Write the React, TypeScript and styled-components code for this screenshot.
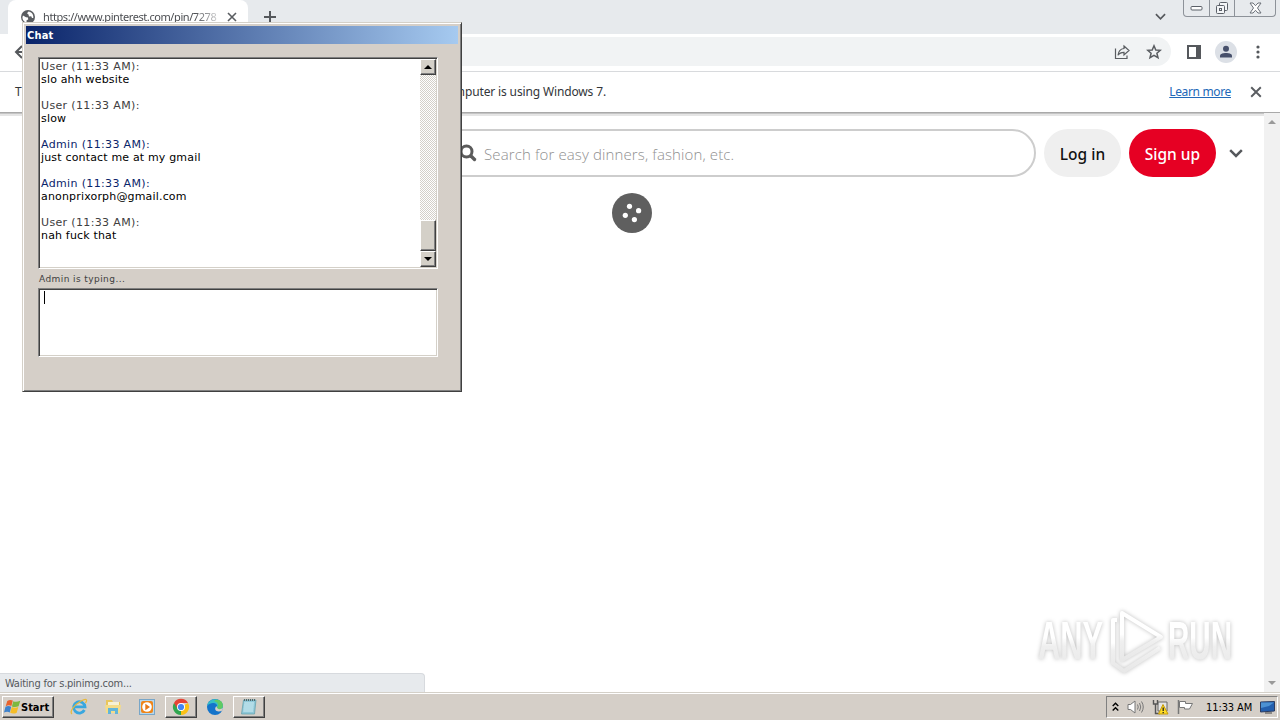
import type { ReactNode } from 'react';
import styled, { createGlobalStyle, css } from 'styled-components';

interface Message {
    author: 'User' | 'Admin';
    time: string;
    text: string;
}

const messages: Message[] = [
    { author: 'User', time: '11:33 AM', text: 'slo ahh website' },
    { author: 'User', time: '11:33 AM', text: 'slow' },
    { author: 'Admin', time: '11:33 AM', text: 'just contact me at my gmail' },
    { author: 'Admin', time: '11:33 AM', text: 'anonprixorph@gmail.com' },
    { author: 'User', time: '11:33 AM', text: 'nah fuck that' },
];

function CloseIcon({ size = 10 }: { size?: number }) {
    return (
        <svg width={size} height={size} viewBox="0 0 10 10">
            <path d="M1 1L9 9M9 1L1 9" stroke="#5a5d61" strokeWidth="1.6" fill="none" />
        </svg>
    );
}

function ChevronIcon({ size = 12, weight = 2 }: { size?: number; weight?: number }) {
    return (
        <svg width={size} height={size} viewBox="0 0 12 12">
            <path d="M1 3.5L6 8.5L11 3.5" stroke="#55585c" strokeWidth={weight} fill="none" />
        </svg>
    );
}

function TabStrip() {
    return (
        <Strip>
            <Tab>
                <svg width="14" height="14" viewBox="0 0 14 14">
                    <circle cx="7" cy="7" r="7" fill="#5a5d61" />
                    <path d="M2 5.5L5 7.2L7 7.5L7.2 9.5L5.6 10.2L5.5 12.4C3 12 1.2 9.5 1.5 7ZM7.5 1.6L6 3.3L7.5 4.6L8 6.4L10.2 6.3L11 8L12.3 8C12.8 4.5 10.5 2 7.5 1.6Z" fill="#fff" />
                </svg>
                <TabTitle>https://www.pinterest.com/pin/7278</TabTitle>
                <CloseIcon />
            </Tab>
            <NewTab>
                <svg width="12" height="12" viewBox="0 0 12 12">
                    <path d="M6 0V12M0 6H12" stroke="#55585c" strokeWidth="2" />
                </svg>
            </NewTab>
            <TabSearch>
                <ChevronIcon size={11} weight={1.8} />
            </TabSearch>
            <WindowControls>
                <Control $width={25}>
                    <svg width="13" height="6" viewBox="0 0 13 6">
                        <rect x="1" y="1.5" width="11" height="3.5" rx="1" fill="#fff" stroke="#5b6068" />
                    </svg>
                </Control>
                <Control $width={25}>
                    <svg width="14" height="14" viewBox="0 0 14 14" fill="#f3f5f7" stroke="#5b6068">
                        <rect x="4.5" y="1.5" width="8" height="8" rx="1" />
                        <rect x="1.5" y="4.5" width="8" height="8" rx="1" />
                        <rect x="4.5" y="7.5" width="2" height="2" />
                    </svg>
                </Control>
                <Control $width={41}>
                    <svg width="13" height="12" viewBox="0 0 13 12">
                        <path d="M1 1H4L6.5 3.7L9 1H12L8.5 6L12 11H9L6.5 8.3L4 11H1L4.5 6Z" fill="#fff" stroke="#6b7078" />
                    </svg>
                </Control>
            </WindowControls>
        </Strip>
    );
}

function Toolbar() {
    return (
        <Bar>
            <svg width="14" height="14" viewBox="0 0 14 14">
                <path d="M14 7H2M8 1L2 7L8 13" stroke="#55585c" strokeWidth="2" fill="none" />
            </svg>
            <Omnibox>
                <svg width="16" height="16" viewBox="0 0 16 16" fill="none" stroke="#5a5d61" strokeWidth="1.2">
                    <path d="M1.5 4.5V14.5H13V11.5" />
                    <path d="M10 2L15 6.5L10 11V8.3C7.2 8.3 5.2 9.2 4 11.3C4.3 8 6 5 10 4.5Z" />
                </svg>
                <svg width="16" height="16" viewBox="0 0 16 16" fill="none" stroke="#5a5d61" strokeWidth="1.5">
                    <path d="M8 1.8L9.8 6L14.3 6.3L10.9 9.2L12 13.7L8 11.3L4 13.7L5.1 9.2L1.7 6.3L6.2 6Z" />
                </svg>
            </Omnibox>
            <SidePanelIcon />
            <Avatar>
                <svg width="14" height="14" viewBox="0 0 14 14" fill="#47506b">
                    <circle cx="7" cy="3.8" r="3" />
                    <path d="M1 12.5V11C1 8.8 4 8 7 8S13 8.8 13 11V12.5Z" />
                </svg>
            </Avatar>
            <svg width="4" height="14" viewBox="0 0 4 14" fill="#55585c">
                <circle cx="2" cy="2" r="1.6" />
                <circle cx="2" cy="7" r="1.6" />
                <circle cx="2" cy="12" r="1.6" />
            </svg>
        </Bar>
    );
}

function InfoBar() {
    return (
        <Info>
            <InfoText>
                <span>T</span>
                <span>computer is using Windows 7.</span>
            </InfoText>
            <LearnMore>Learn more</LearnMore>
            <CloseIcon size={12} />
        </Info>
    );
}

function Watermark() {
    return (
        <Mark width="210" height="76" viewBox="0 0 210 76">
            <defs>
                <linearGradient id="fade" x1="0" y1="0" x2="0" y2="1">
                    <stop offset="0.45" stopColor="#fff" />
                    <stop offset="0.6" stopColor="#efefef" />
                    <stop offset="1" stopColor="#e8e8e8" />
                </linearGradient>
            </defs>
            <g fill="url(#fade)" fontFamily="'Liberation Sans Narrow', 'Liberation Sans', sans-serif" fontWeight="700" fontSize="53">
                <text x="8" y="58" textLength="65" lengthAdjust="spacingAndGlyphs">ANY</text>
                <text x="138" y="58" textLength="64" lengthAdjust="spacingAndGlyphs">RUN</text>
            </g>
            <g fill="none" stroke="url(#fade)" strokeWidth="4" strokeLinejoin="round">
                <path d="M92 54V12L131 36L92 59Z" />
                <path d="M83 53V19H87M83 50V62L94 70L130 47" />
            </g>
        </Mark>
    );
}

function Page() {
    return (
        <Content>
            <Main>
                <Header>
                    <Search>
                        <svg width="18" height="18" viewBox="0 0 18 18" fill="none" stroke="#5b5b5b" strokeLinecap="round">
                            <circle cx="7.5" cy="7.5" r="5.5" strokeWidth="3" />
                            <path d="M12 12L15.5 15.5" strokeWidth="3.4" />
                        </svg>
                        <span>Search for easy dinners, fashion, etc.</span>
                    </Search>
                    <Pill $width={77}>Log in</Pill>
                    <Pill $width={87} $primary>
                        Sign up
                    </Pill>
                    <ChevronIcon size={14} weight={2.1} />
                </Header>
                <Spinner>
                    <svg width="40" height="40" viewBox="0 0 40 40" fill="#fff">
                        <circle cx="17.5" cy="13.3" r="2.6" />
                        <circle cx="26.6" cy="17.7" r="2.6" />
                        <circle cx="13.3" cy="22.3" r="2.6" />
                        <circle cx="22.4" cy="26.6" r="2.6" />
                    </svg>
                </Spinner>
                <Bottom>
                    <Status>Waiting for s.pinimg.com...</Status>
                    <Watermark />
                </Bottom>
            </Main>
            <PageScroll>
                <Arrow $color="#9a9a9a" $size={4} $up />
                <Arrow $color="#9a9a9a" $size={4} />
            </PageScroll>
        </Content>
    );
}

function ChatWindow() {
    return (
        <Chat>
            <ChatTitle>Chat</ChatTitle>
            <ChatBody>
                <Log>
                    <LogText>
                        {messages.map((message, index) => (
                            <Entry key={index}>
                                <Author $admin={message.author === 'Admin'}>
                                    {message.author} ({message.time}):
                                </Author>
                                <p>{message.text}</p>
                            </Entry>
                        ))}
                    </LogText>
                    <LogScroll>
                        <ScrollButton>
                            <Arrow $color="#000" $size={4} $up />
                        </ScrollButton>
                        <Track />
                        <Thumb />
                        <ScrollButton>
                            <Arrow $color="#000" $size={4} />
                        </ScrollButton>
                    </LogScroll>
                </Log>
                <Typing>Admin is typing...</Typing>
                <Input>
                    <Caret />
                </Input>
            </ChatBody>
        </Chat>
    );
}

function TaskButton({ active, children }: { active?: boolean; children: ReactNode }) {
    return (
        <Task $active={active}>
            <svg width="20" height="20" viewBox="0 0 20 20">
                {children}
            </svg>
        </Task>
    );
}

function Taskbar() {
    return (
        <Tasks>
            <Start>
                <svg width="17" height="16" viewBox="0 0 17 16">
                    <path d="M3.3 2Q6 0 8.8 1.6L7.4 7Q4.8 5.6 1.7 7.2Z" fill="#e8622c" />
                    <path d="M9.3 2.2Q12 3.6 16.3 1.8L14.6 7.3Q11 8.8 7.9 7.4Z" fill="#7db83f" />
                    <path d="M1.5 7.8Q4.5 6.4 7.2 7.8L5.8 13.4Q3 12 0 13.6Z" fill="#3e82cc" />
                    <path d="M7.8 8.1Q11 9.6 14.3 8.1L12.7 13.7Q9.5 15.4 6.2 13.8Z" fill="#f5bd28" />
                </svg>
                Start
            </Start>
            <Launchers>
                <TaskButton>
                    <path d="M15.4 13A5.7 5.7 0 1 1 16 9.8H6" fill="none" stroke="#39a7df" strokeWidth="2.8" />
                    <path d="M3 17C0 15 5 8 12 4C17 1.2 19 2.2 16.5 6" fill="none" stroke="#e8b93b" strokeWidth="1.3" />
                </TaskButton>
                <TaskButton>
                    <path d="M3 3H9L10 5H17V16H3Z" fill="#e9c65c" />
                    <path d="M5 5H16V10H5Z" fill="#f7f1d3" />
                    <path d="M2 8H18L17 16H3Z" fill="#f4dc89" />
                    <path d="M5 17V11H15V17H12V14H8V17Z" fill="#62b5d9" />
                </TaskButton>
                <TaskButton>
                    <rect x="2.5" y="2.5" width="15" height="15" fill="#b7d7ec" stroke="#78a6c8" />
                    <rect x="4" y="4" width="12" height="12" rx="2" fill="#ef8519" />
                    <circle cx="10" cy="10" r="4.8" fill="#fff" />
                    <path d="M8.3 6.8L13 10L8.3 13.2Z" fill="#e77817" />
                </TaskButton>
                <TaskButton active>
                    <path d="M10 10L17 6A8 8 0 0 1 10 18Z" fill="#fbc116" />
                    <path d="M10 10V18A8 8 0 0 1 3 6Z" fill="#31a650" />
                    <path d="M10 6H17A8 8 0 0 0 3 6L6.7 12Z" fill="#e54335" />
                    <circle cx="10" cy="10" r="4" fill="#fff" />
                    <circle cx="10" cy="10" r="3.1" fill="#4285f4" />
                </TaskButton>
                <TaskButton>
                    <circle cx="10" cy="10" r="8" fill="#1474ca" />
                    <path d="M2.3 9C3 0 17 0 18 9C18.3 13 12.5 14 11.8 11C14 6 6 4 2.3 9Z" fill="#36bfc5" />
                    <path d="M10.5 3C16 2 19 7 17.5 10.5C16 13 12 13 11.8 11C15 7 12 5 9 4Z" fill="#60ca63" />
                    <path d="M11.5 9C8 13 12 16 17.5 13.5L18 10.5C16 13 12 13 11.5 9Z" fill="#d7cfc8" />
                </TaskButton>
                <TaskButton active>
                    <path d="M4.5 3H17L15.5 17H2.5Z" fill="#8fc8d8" stroke="#609dab" strokeWidth=".7" />
                    <path d="M5.3 6H15M5 8H14.8M4.8 10H14.6M4.5 12H14.4M4.3 14H14.2" stroke="#dff5fa" strokeWidth=".9" />
                    <path d="M5 3H17" stroke="#52666a" strokeWidth="2" strokeDasharray="1 1" />
                </TaskButton>
            </Launchers>
            <Tray>
                <svg width="7" height="10" viewBox="0 0 7 10" fill="none" stroke="#000" strokeWidth="1.4">
                    <path d="M.7 4L3.5 1.2L6.3 4M.7 8.5L3.5 5.7L6.3 8.5" />
                </svg>
                <svg width="17" height="16" viewBox="0 0 17 16" fill="none" stroke="#777">
                    <path d="M1 5.5H3.5L8 2V14L3.5 10.5H1Z" fill="#fff" />
                    <path d="M10.5 5.5Q12 8 10.5 10.5M12.5 4Q15 8 12.5 12M14.5 2.5Q18 8 14.5 13.5" />
                </svg>
                <svg width="17" height="16" viewBox="0 0 17 16">
                    <path d="M6 3H15V12H6Z" fill="#e5e5e5" stroke="#666" />
                    <path d="M1.5 1V5H5.5V1M3.5 5V14.5H8" fill="none" stroke="#555" strokeWidth="1.4" />
                    <path d="M11 5.5L16 15H6.5Z" fill="#ffdd25" stroke="#c79b08" />
                    <path d="M11.2 8.5V12M11.2 13V14.2" stroke="#222" strokeWidth="1.3" />
                </svg>
                <svg width="17" height="16" viewBox="0 0 17 16" fill="#fff" stroke="#777">
                    <path d="M1.5 1V15" strokeWidth="1.5" />
                    <path d="M2.5 2.5H8.5V4.5H15.5L12.5 10H7.5V8.5H2.5Z" />
                </svg>
                <Clock>11:33 AM</Clock>
                <svg width="15" height="13" viewBox="0 0 15 13">
                    <path d="M.5 1L14.5 .5V10L.5 11Z" fill="#235fae" stroke="#2d3c60" />
                    <path d="M1 1.5H14L9 5L1 7Z" fill="#4c91d3" />
                    <path d="M5 12H12" stroke="#444" />
                </svg>
            </Tray>
        </Tasks>
    );
}

function App() {
    return (
        <>
            <GlobalStyle />
            <Desktop>
                <Browser>
                    <TabStrip />
                    <Toolbar />
                    <InfoBar />
                    <Page />
                </Browser>
                <Taskbar />
                <ChatWindow />
            </Desktop>
        </>
    );
}

export default App;

const GlobalStyle = createGlobalStyle`
    * {
        box-sizing: border-box;
    }

    body {
        margin: 0;
        font-family: 'DejaVu Sans Condensed', 'DejaVu Sans', sans-serif;
        font-size: 11px;
        overflow: hidden;
    }

    p {
        margin: 0;
    }

    svg {
        display: block;
        flex-shrink: 0;
    }
`;

const raised = css`
    border: 1px solid;
    border-color: #fff #404040 #404040 #fff;
    box-shadow: inset -1px -1px #808080;
`;

const Desktop = styled.div`
    position: relative;
    display: flex;
    flex-direction: column;
    width: 1280px;
    height: 720px;
    overflow: hidden;
    background: #fff;
`;

const Browser = styled.div`
    flex: 1;
    display: flex;
    flex-direction: column;
    min-height: 0;
`;

const Strip = styled.div`
    display: flex;
    height: 34px;
    padding-left: 8px;
    background: #e7eaed;
`;

const Tab = styled.div`
    display: flex;
    align-items: center;
    width: 240px;
    padding: 0 11px 0 13px;
    border-radius: 8px 8px 0 0;
    background: #fff;
`;

const TabTitle = styled.span`
    width: 176px;
    margin: 0 8px;
    padding-bottom: 1px;
    white-space: nowrap;
    color: #4b4d51;
    font-family: 'Noto Sans', sans-serif;
    font-size: 11px;
    letter-spacing: -0.42px;
    mask-image: linear-gradient(90deg, #000 86%, rgba(0, 0, 0, 0.2));
`;

const NewTab = styled.div`
    padding: 11px 0 0 16px;
`;

const TabSearch = styled.div`
    margin: 11px 17px 0 auto;
`;

const WindowControls = styled.div`
    display: flex;
    height: 17px;
    margin-right: 4px;
    border: 1px solid #8d9299;
    border-top: 0;
    border-radius: 0 0 4px 4px;
`;

const Control = styled.div<{ $width: number }>`
    display: flex;
    align-items: center;
    justify-content: center;
    width: ${({ $width }) => $width}px;

    & + & {
        border-left: 1px solid #8d9299;
    }
`;

const Bar = styled.div`
    display: flex;
    align-items: center;
    height: 38px;
    padding: 0 20px 2px 14px;
    border-bottom: 1px solid #d8dadd;
`;

const Omnibox = styled.div`
    flex: 1;
    display: flex;
    align-items: center;
    justify-content: flex-end;
    gap: 16px;
    height: 29px;
    margin-left: 82px;
    padding-right: 9px;
    border-radius: 15px;
    background: #f1f3f4;
`;

const SidePanelIcon = styled.div`
    width: 14px;
    height: 14px;
    margin-left: 16px;
    border: 2px solid #55585c;
    border-right-width: 5px;
`;

const Avatar = styled.div`
    display: flex;
    align-items: center;
    justify-content: center;
    width: 22px;
    height: 22px;
    margin: 0 19px 0 14px;
    border-radius: 50%;
    background: #dce0e6;
`;

const Info = styled.div`
    display: flex;
    align-items: center;
    height: 41px;
    padding: 0 18px 1px 15px;
    border-bottom: 1px solid #a9a9a9;
    color: #333639;
    font-family: 'Noto Sans', sans-serif;
    font-size: 12px;
`;

const InfoText = styled.div`
    display: flex;
    justify-content: space-between;
    width: 591px;
    white-space: nowrap;
    letter-spacing: -0.14px;
`;

const LearnMore = styled.span`
    margin: 0 19px 0 auto;
    color: #2268b8;
    letter-spacing: -0.35px;
    text-decoration: underline;
`;

const Content = styled.div`
    flex: 1;
    display: flex;
    min-height: 0;
    box-shadow: inset 0 1px #c4c4c4, inset 0 3px #e5e5e5;
`;

const Main = styled.div`
    flex: 1;
    display: flex;
    flex-direction: column;
    align-items: center;
`;

const Header = styled.div`
    display: flex;
    align-items: center;
    align-self: stretch;
    gap: 8px;
    padding: 16px 21px 16px 122px;
    font-family: 'Noto Sans', sans-serif;
    font-size: 16px;

    > svg {
        margin-left: 5px;
    }
`;

const Search = styled.div`
    flex: 1;
    display: flex;
    align-items: center;
    gap: 7px;
    height: 48px;
    padding-left: 335px;
    border: 2px solid #cdcdcd;
    border-radius: 24px;
    color: #8f8f8f;
    font-family: 'Open Sans', 'Noto Sans', sans-serif;
    font-size: 15px;
    font-weight: 300;
    letter-spacing: 0.12px;
    white-space: nowrap;

    span {
        padding-top: 1px;
    }
`;

const Pill = styled.div<{ $width: number; $primary?: boolean }>`
    width: ${({ $width }) => $width}px;
    height: 48px;
    padding-top: 2px;
    border-radius: 24px;
    background: ${({ $primary }) => ($primary ? '#e60023' : '#efefef')};
    color: ${({ $primary }) => ($primary ? '#fff' : '#111')};
    font-size: 15.5px;
    font-weight: 500;
    line-height: 47px;
    text-align: center;
`;

const Spinner = styled.div`
    width: 40px;
    height: 40px;
    border-radius: 50%;
    background: #5f5f5f;
`;

const Bottom = styled.div`
    display: flex;
    align-items: flex-end;
    align-self: stretch;
    justify-content: space-between;
    margin-top: auto;
    padding-right: 24px;
`;

const Status = styled.div`
    width: 425px;
    height: 19px;
    padding-left: 5px;
    border: 1px solid #d7dade;
    border-width: 1px 1px 0 0;
    border-top-right-radius: 4px;
    background: #e7eaed;
    color: #55585c;
    letter-spacing: -0.23px;
    line-height: 19px;
`;

const Mark = styled.svg`
    margin-bottom: 15px;
    overflow: visible;
    filter: drop-shadow(0 0 2px rgba(0, 0, 0, 0.26));
`;

const PageScroll = styled.div`
    display: flex;
    flex-direction: column;
    align-items: center;
    justify-content: space-between;
    width: 16px;
    padding: 7px 0;
    background: #f1f1f1;
`;

const Arrow = styled.div<{ $color: string; $size: number; $up?: boolean }>`
    width: 0;
    height: 0;
    border: ${({ $size }) => $size}px solid transparent;
    ${({ $up, $color, $size }) =>
        $up
            ? css`
                  border-top: 0;
                  border-bottom: ${$size}px solid ${$color};
              `
            : css`
                  border-bottom: 0;
                  border-top: ${$size}px solid ${$color};
              `}
`;

const Chat = styled.div`
    position: absolute;
    top: 22px;
    left: 22px;
    width: 440px;
    height: 370px;
    padding: 3px;
    border: 1px solid;
    border-color: #d4d0c8 #404040 #404040 #d4d0c8;
    box-shadow: inset 1px 1px #fff, inset -1px -1px #808080;
    background: #d5cfc8;
`;

const ChatTitle = styled.div`
    height: 18px;
    padding-left: 1px;
    background: linear-gradient(90deg, #0a246a, #a6caf0);
    color: #fff;
    font-weight: 700;
    letter-spacing: 0.2px;
    line-height: 19px;
`;

const ChatBody = styled.div`
    padding: 13px 20px 0 12px;
`;

const Log = styled.div`
    display: flex;
    width: 400px;
    height: 212px;
    border: 1px solid;
    border-color: #808080 #fff #fff #808080;
    box-shadow: inset 1px 1px #404040, inset -1px -1px #d4d0c8;
    padding: 1px;
    background: #fff;
    background-clip: content-box;
`;

const LogText = styled.div`
    flex: 1;
    padding: 1px 0 0 1px;
    color: #000;
    font-family: 'DejaVu Sans', sans-serif;
    font-size: 11px;
    letter-spacing: 0.17px;
    line-height: 13px;
`;

const Entry = styled.div`
    margin-bottom: 13px;
`;

const Author = styled.p<{ $admin: boolean }>`
    color: ${({ $admin }) => ($admin ? '#0a246a' : '#404040')};
    letter-spacing: 0.35px;
`;

const LogScroll = styled.div`
    display: flex;
    flex-direction: column;
    width: 16px;
`;

const ScrollButton = styled.div`
    display: flex;
    align-items: center;
    justify-content: center;
    height: 16px;
    background: #d4d0c8;
    ${raised}
`;

const Track = styled.div`
    flex: 1;
    background: repeating-conic-gradient(#d4d0c8 0 25%, #fff 0 50%) 0 0 / 2px 2px;
`;

const Thumb = styled.div`
    height: 31px;
    background: #d4d0c8;
    ${raised}
`;

const Typing = styled.p`
    height: 19px;
    padding-left: 1px;
    color: #404040;
    font-family: 'DejaVu Sans', sans-serif;
    font-size: 9px;
    letter-spacing: 0.42px;
    line-height: 21px;
`;

const Input = styled.div`
    width: 400px;
    height: 69px;
    padding: 2px 5px;
    border: 1px solid;
    border-color: #808080 #fff #fff #808080;
    box-shadow: inset 1px 1px #404040, inset -1px -1px #d4d0c8;
    background: #fff;
`;

const Caret = styled.div`
    width: 1px;
    height: 13px;
    background: #000;
`;

const Tasks = styled.div`
    display: flex;
    align-items: center;
    height: 28px;
    padding: 1px 2px 0;
    border-top: 1px solid #d4d0c8;
    box-shadow: inset 0 1px #fff;
    background: #d5cfc8;
`;

const Start = styled.div`
    display: flex;
    align-items: center;
    width: 52px;
    height: 22px;
    padding-left: 1px;
    color: #000;
    font-weight: 700;
    ${raised}
`;

const Launchers = styled.div`
    display: flex;
    gap: 2px;
    margin-left: 9px;
`;

const Task = styled.div<{ $active?: boolean }>`
    display: flex;
    align-items: center;
    justify-content: center;
    width: 32px;
    height: 22px;
    ${({ $active }) => $active && raised}
`;

const Tray = styled.div`
    display: flex;
    align-items: center;
    gap: 8px;
    width: 172px;
    height: 22px;
    margin-left: auto;
    padding-left: 5px;
    border: 1px solid;
    border-color: #808080 #fff #fff #808080;
`;

const Clock = styled.span`
    width: 46px;
    margin-left: 4px;
    color: #000;
    letter-spacing: -0.1px;
    white-space: nowrap;
`;
